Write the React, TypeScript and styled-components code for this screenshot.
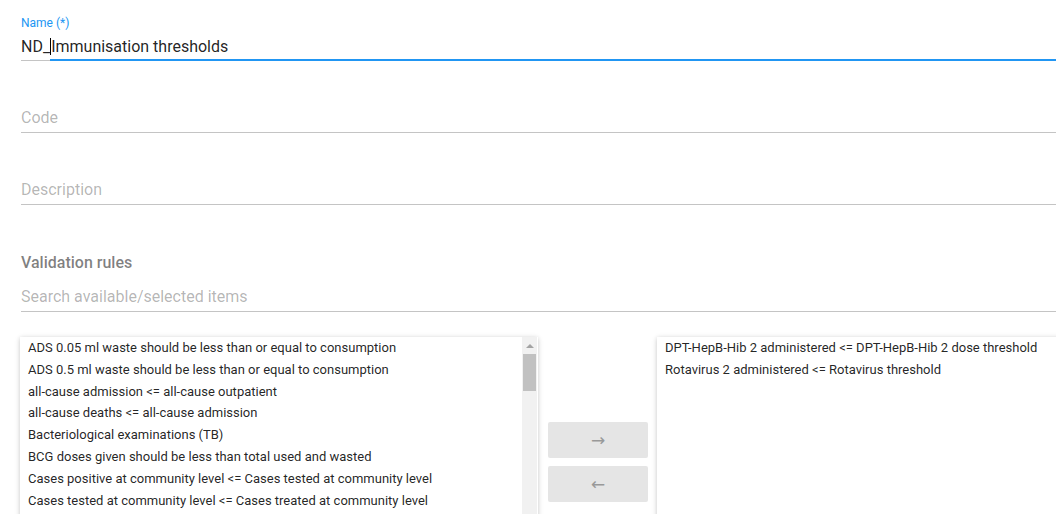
import React from "react";
import styled, { createGlobalStyle } from "styled-components";

const GlobalStyle = createGlobalStyle`
  html, body {
    margin: 0;
    padding: 0;
    overflow: hidden;
    background: #ffffff;
  }
  body {
    font-family: Roboto, "Noto Sans", "Liberation Sans", sans-serif;
  }
`;

const Page = styled.div`
  width: 1180px;
  height: 514px;
  overflow: hidden;
  padding-left: 21px;
  box-sizing: border-box;
`;

const Field = styled.div`
  height: 72px;
  display: flex;
  flex-direction: column;
  justify-content: flex-end;
  padding-bottom: 11px;
  box-sizing: border-box;
`;

const FloatingLabel = styled.div`
  font-size: 12px;
  line-height: 16px;
  color: #2196f3;
  margin-bottom: 4px;
`;

const InputText = styled.div<{ $placeholder?: boolean }>`
  height: 24px;
  font-size: 16px;
  line-height: 24px;
  color: ${(p) => (p.$placeholder ? "rgba(0, 0, 0, 0.3)" : "rgba(0, 0, 0, 0.87)")};
  margin-bottom: ${(p) => (p.$placeholder ? "2px" : "1px")};
  white-space: nowrap;
`;

const Caret = styled.span`
  display: inline-block;
  width: 1px;
  height: 17px;
  background: #000;
  vertical-align: -3px;
`;

const Underline = styled.div`
  position: relative;
  height: 1px;
  background: #c4c4c4;
`;

const FocusLine = styled.div`
  position: absolute;
  left: 29px;
  right: 0;
  bottom: 0;
  height: 2px;
  background: #2196f3;
`;

const SectionTitle = styled.div`
  margin-top: 35px;
  font-size: 16px;
  line-height: 24px;
  font-weight: 500;
  color: rgba(0, 0, 0, 0.5);
`;

const SearchField = styled.div`
  margin-top: 10px;
  display: flex;
  flex-direction: column;
`;

const SearchText = styled.div`
  height: 24px;
  font-size: 16px;
  line-height: 24px;
  color: rgba(0, 0, 0, 0.3);
  margin-bottom: 2px;
`;

const TransferRow = styled.div`
  margin-top: 25px;
  margin-left: -1px;
  height: 250px;
  display: flex;
  align-items: stretch;
`;

const ListBox = styled.div`
  width: 518px;
  background: #fff;
  box-shadow: rgba(0, 0, 0, 0.12) 0 1px 6px, rgba(0, 0, 0, 0.12) 0 1px 4px;
  display: flex;
  overflow: hidden;
`;

const Items = styled.div`
  flex: 1;
  padding-left: 8px;
`;

const Item = styled.div`
  height: 21.8px;
  font-size: 13px;
  line-height: 21.8px;
  color: rgba(0, 0, 0, 0.87);
  white-space: nowrap;
`;

const ScrollTrack = styled.div`
  width: 15px;
  margin-right: 1px;
  background: #f1f1f1;
  display: flex;
  flex-direction: column;
`;

const ScrollArrow = styled.div`
  height: 17px;
  display: flex;
  align-items: center;
  justify-content: center;
`;

const UpTriangle = styled.div`
  width: 0;
  height: 0;
  border-left: 4px solid transparent;
  border-right: 4px solid transparent;
  border-bottom: 4px solid #a3a3a3;
`;

const ScrollThumb = styled.div`
  height: 37px;
  margin: 0 1px;
  background: #c1c1c1;
`;

const ButtonColumn = styled.div`
  width: 119px;
  display: flex;
  flex-direction: column;
  justify-content: center;
  gap: 8px;
  padding-left: 10px;
  box-sizing: border-box;
`;

const MoveButton = styled.button`
  width: 100px;
  height: 36px;
  border: none;
  border-radius: 2px;
  background: #e5e5e5;
  color: #999999;
  font-family: "DejaVu Sans", sans-serif;
  font-size: 17px;
  line-height: 36px;
  padding: 0;
  cursor: default;
`;

const availableRules = [
  "ADS 0.05 ml waste should be less than or equal to consumption",
  "ADS 0.5 ml waste should be less than or equal to consumption",
  "all-cause admission <= all-cause outpatient",
  "all-cause deaths <= all-cause admission",
  "Bacteriological examinations (TB)",
  "BCG doses given should be less than total used and wasted",
  "Cases positive at community level <= Cases tested at community level",
  "Cases tested at community level <= Cases treated at community level",
];

const selectedRules = [
  "DPT-HepB-Hib 2 administered <= DPT-HepB-Hib 2 dose threshold",
  "Rotavirus 2 administered <= Rotavirus threshold",
];

export default function App() {
  return (
    <>
      <GlobalStyle />
      <Page>
        <Field>
          <FloatingLabel>Name (*)</FloatingLabel>
          <InputText>
            ND_<Caret />Immunisation thresholds
          </InputText>
          <Underline>
            <FocusLine />
          </Underline>
        </Field>
        <Field>
          <InputText $placeholder>Code</InputText>
          <Underline />
        </Field>
        <Field>
          <InputText $placeholder>Description</InputText>
          <Underline />
        </Field>
        <SectionTitle>Validation rules</SectionTitle>
        <SearchField>
          <SearchText>Search available/selected items</SearchText>
          <Underline />
        </SearchField>
        <TransferRow>
          <ListBox>
            <Items>
              {availableRules.map((r) => (
                <Item key={r}>{r}</Item>
              ))}
            </Items>
            <ScrollTrack>
              <ScrollArrow>
                <UpTriangle />
              </ScrollArrow>
              <ScrollThumb />
            </ScrollTrack>
          </ListBox>
          <ButtonColumn>
            <MoveButton>→</MoveButton>
            <MoveButton>←</MoveButton>
          </ButtonColumn>
          <ListBox>
            <Items>
              {selectedRules.map((r) => (
                <Item key={r}>{r}</Item>
              ))}
            </Items>
          </ListBox>
        </TransferRow>
      </Page>
    </>
  );
}
